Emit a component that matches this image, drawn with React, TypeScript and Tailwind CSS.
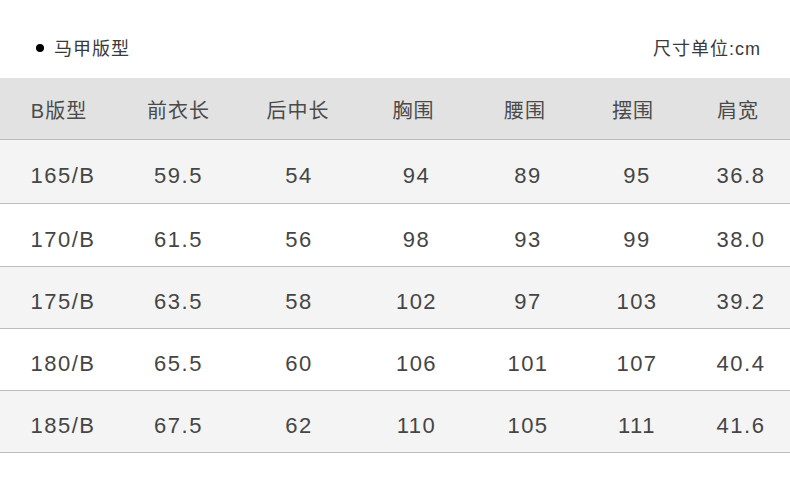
const HEADERS = ["B版型", "前衣长", "后中长", "胸围", "腰围", "摆围", "肩宽"];

const ROWS = [
  { cells: ["165/B", "59.5", "54", "94", "89", "95", "36.8"], bg: "bg-[#f4f4f4]", h: "h-[64px]" },
  { cells: ["170/B", "61.5", "56", "98", "93", "99", "38.0"], bg: "bg-white", h: "h-[63px]" },
  { cells: ["175/B", "63.5", "58", "102", "97", "103", "39.2"], bg: "bg-[#f4f4f4]", h: "h-[62px]" },
  { cells: ["180/B", "65.5", "60", "106", "101", "107", "40.4"], bg: "bg-white", h: "h-[62px]" },
  { cells: ["185/B", "67.5", "62", "110", "105", "111", "41.6"], bg: "bg-[#f4f4f4]", h: "h-[62px]" },
];

// small per-column nudges so data sits where the picture has it
const DATA_SHIFT = ["pl-[8px]", "", "pl-[2px]", "pl-[6px]", "pl-[6px]", "pl-[8px]", "pl-[6px]"];

const GRID = "grid grid-cols-[118px_121px_118px_113px_110px_106px_1fr]";

export default function App() {
  return (
    <div
      className="w-[790px] h-[496px] bg-white overflow-hidden"
      style={{ fontFamily: '"Liberation Sans", "Noto Sans CJK SC", sans-serif' }}
    >
      {/* title line */}
      <div className="h-[78px] pt-[38px] pl-[36px] pr-[29px] flex justify-between items-start">
        <div className="flex items-center leading-[22px]">
          <span className="block w-[8px] h-[8px] rounded-full bg-black mb-[3px]" />
          <span className="ml-[10px] text-[18px] tracking-[1px] text-[#3a3a3a]">马甲版型</span>
        </div>
        <span className="text-[18px] leading-[22px] text-[#3a3a3a] tracking-[1px]">尺寸单位:cm</span>
      </div>

      {/* header */}
      <div className={`${GRID} h-[62px] bg-[#e2e2e2] border-b border-[#bcbcbc]`}>
        {HEADERS.map((h) => (
          <div key={h} className="flex items-center justify-center pt-[5px] text-[20px] tracking-[1px] text-[#4a4a4a]">
            {h}
          </div>
        ))}
      </div>

      {/* rows */}
      {ROWS.map((r) => (
        <div key={r.cells[0]} className={`${GRID} ${r.h} ${r.bg} border-b border-[#bcbcbc]`}>
          {r.cells.map((c, i) => (
            <div
              key={i}
              className={`flex items-center justify-center pt-[8px] text-[22px] tracking-[1.5px] text-[#454545] ${DATA_SHIFT[i]}`}
            >
              {c}
            </div>
          ))}
        </div>
      ))}
    </div>
  );
}
